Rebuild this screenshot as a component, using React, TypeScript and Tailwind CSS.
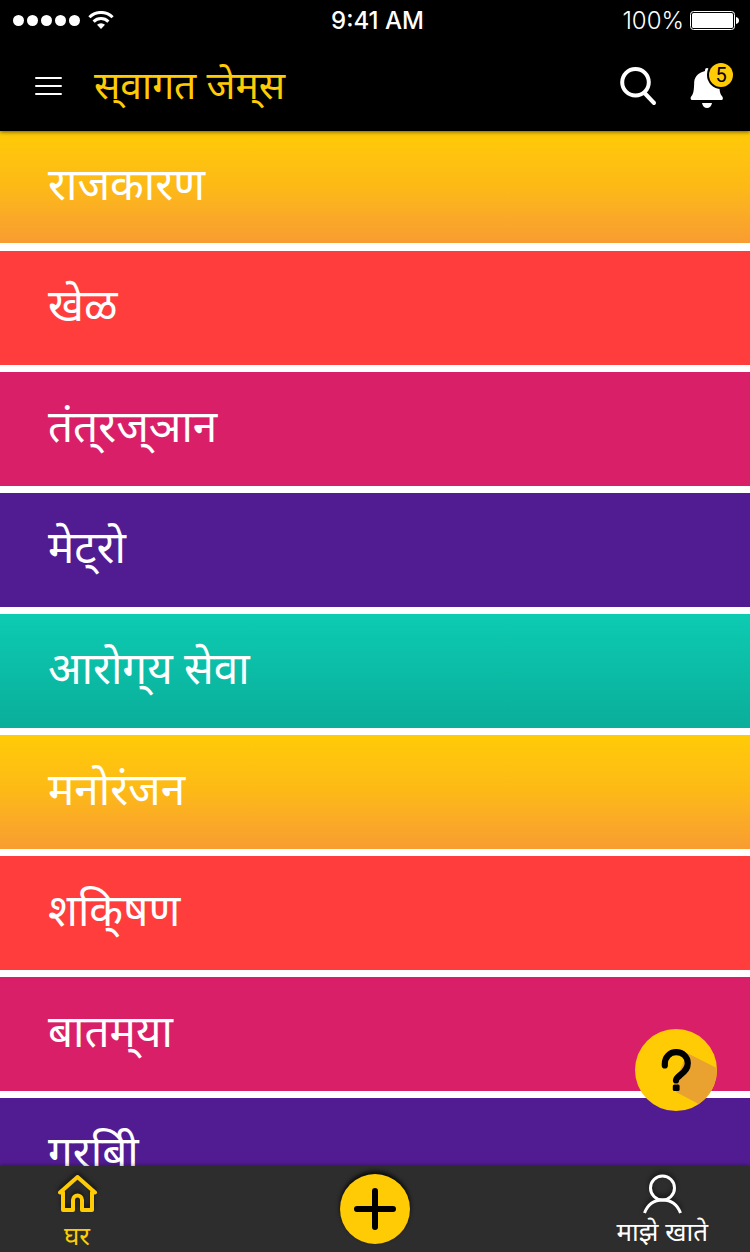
const categories = [
  { label: "राजकारण", tone: "bg-linear-to-b from-[#ffcb06] via-[#fdb916] to-[#f89c30]" },
  { label: "खेळ", tone: "bg-[#ff3d3d]" },
  { label: "तंत्\u200cरज्\u200cञान", tone: "bg-[#da1f69]" },
  { label: "मेट्\u200cरो", tone: "bg-[#511b92]" },
  { label: "आरोग्\u200cय सेवा", tone: "bg-linear-to-b from-[#0dcbb2] to-[#0aae9a]" },
  { label: "मनोरंजन", tone: "bg-linear-to-b from-[#ffcb06] via-[#fdb916] to-[#f89c30]" },
  { label: "शकि्षण", tone: "bg-[#ff3d3d]" },
  { label: "बातम्\u200cया", tone: "bg-[#da1f69]" },
  { label: "गरबिी", tone: "bg-[#511b92]" },
];

function StatusBar() {
  return (
    <div className="grid h-10 grid-cols-3 items-center pl-3 pr-[11px] font-['Inter',sans-serif] text-2xl text-white">
      <div className="flex items-center gap-[7px]">
        <svg className="h-3 w-[69px]" viewBox="0 0 69 12" fill="currentColor" aria-hidden="true">
          <circle cx="6.5" cy="6.5" r="5.5" />
          <circle cx="20.5" cy="6.5" r="5.5" />
          <circle cx="34.5" cy="6.5" r="5.5" />
          <circle cx="48.5" cy="6.5" r="5.5" />
          <circle cx="62.5" cy="6.5" r="5.5" />
        </svg>
        <svg className="h-[18px] w-[26px]" viewBox="0 0 26 18" fill="none" stroke="currentColor" strokeWidth="3" aria-hidden="true">
          <path d="M1.4 6.2a16.5 16.5 0 0 1 23.2 0" />
          <path d="M5.6 10.6a10.5 10.5 0 0 1 14.8 0" />
          <path d="M13 18l-4-4.2a5.8 5.8 0 0 1 8 0z" fill="currentColor" stroke="none" />
        </svg>
      </div>
      <div className="pl-1 pt-px text-center font-medium">9:41 AM</div>
      <div className="flex items-center justify-end gap-[6px]">
        <span className="pt-px font-light">100%</span>
        <svg className="h-[19px] w-[49px]" viewBox="0 0 49 19" aria-hidden="true">
          <rect x="0.5" y="0.5" width="44" height="18" rx="3" fill="none" stroke="currentColor" />
          <rect x="2" y="2" width="41" height="15" rx="1.5" fill="currentColor" />
          <path d="M46 6c2 .6 3 1.800 3 3.500s-1 2.900-3 3.500z" fill="currentColor" />
        </svg>
      </div>
    </div>
  );
}

export default function App() {
  return (
    <div className="relative flex h-screen flex-col overflow-hidden bg-white font-['Noto_Sans',sans-serif]">
      <header className="z-10 shrink-0 bg-black shadow-[0_1px_4px_rgba(0,0,0,0.55)]">
        <StatusBar />
        <div className="flex h-[91px] items-center pl-[35px] pr-4">
          <button type="button" aria-label="मेनू" className="text-white">
            <svg className="h-[19px] w-[27px]" viewBox="0 0 27 19" fill="none" stroke="currentColor" strokeWidth="2" strokeLinecap="round" aria-hidden="true">
              <path d="M1 2h25M1 10h25M1 18h25" />
            </svg>
          </button>
          <h1 className="ml-8 pb-1 text-[39px] leading-[56px] text-[#ffcb05]">स्&zwnj;वागत जेम्&zwnj;स</h1>
          <button type="button" aria-label="शोध" className="ml-auto text-white">
            <svg className="h-10 w-[38px]" viewBox="0 0 38 40" fill="none" stroke="currentColor" strokeWidth="4" strokeLinecap="round" aria-hidden="true">
              <circle cx="16.500" cy="16.300" r="13.300" />
              <path d="M26 27.500l9 9.500" />
            </svg>
          </button>
          <button type="button" aria-label="सूचना" className="relative ml-[33px] text-white">
            <svg className="h-[48px] w-11" viewBox="0 0 44 48" aria-hidden="true">
              <path d="M15 8a2 2 0 0 1 4 0v1c6 1.500 9.500 6 10 11 .5 9 1 12 3 14 1.500 2 1 4-.5 4H2.500c-2 0-2.500-2-1-4C3.500 32 4 28 4.200 20c.5-6 5-9.500 10.800-11z" fill="currentColor" />
              <path d="M12 41h10c-.5 3-2.500 5-5 5s-4.500-2-5-5z" fill="currentColor" />
              <circle cx="31" cy="13" r="14" fill="#000" />
              <circle cx="31" cy="13" r="12" fill="#ffcb05" />
            </svg>
            <span className="absolute right-px top-px w-6 text-center font-['Roboto',sans-serif] text-[20px] leading-6 text-black">5</span>
          </button>
        </div>
      </header>

      <main className="min-h-0 flex-1 overflow-y-auto [scrollbar-width:none]">
        <ul className="flex flex-col gap-[7px]">
          {categories.map(({ label, tone }) => (
            <li key={label} className="h-[114px] shrink-0 first:mb-px first:h-28">
              <a href="#" className={`flex h-full items-center px-12 pb-2 text-[44px] leading-[64px] text-white ${tone}`}>
                {label}
              </a>
            </li>
          ))}
        </ul>
      </main>

      <button type="button" aria-label="मदत" className="absolute bottom-[141px] right-[33px] z-20 size-[82px]">
        <svg className="size-full" viewBox="0 0 82 82" aria-hidden="true">
          <circle cx="41" cy="41" r="41" fill="#ffcb05" />
          <path d="M52 24l29.800 15a41 41 0 0 1-18.200 36L41 63l3-19z" fill="#e9a22f" />
          <path d="M29.800 36.500V35c0-6.800 4.700-11.800 11.400-11.800S52.800 28 52.800 34.200c0 5.300-3 8-6.500 11-3 2.600-5.300 4-5.300 6.300" fill="none" stroke="#000" strokeWidth="6.200" strokeLinecap="round" />
          <rect x="37.800" y="55.500" width="6.800" height="6.500" rx="1.500" fill="#000" />
        </svg>
      </button>

      <nav className="z-10 grid h-[86px] shrink-0 grid-cols-3 bg-[#2d2d2d] px-[42px] shadow-[0_-1px_4px_rgba(0,0,0,0.3)]">
        <a href="#" className="ml-[15px] flex w-10 flex-col items-center gap-1 justify-self-start pt-2 text-[#ffcb05]">
          <svg className="h-[39px] w-10 shrink-0 overflow-visible drop-shadow-[0_-3px_2px_rgba(0,0,0,0.5)]" viewBox="0 0 40 39" fill="none" stroke="currentColor" strokeWidth="4" strokeLinejoin="round" strokeLinecap="round" aria-hidden="true">
            <path d="M3 18.500L20.500 3 38 18.500M6 18v18h10V26c0-6 9-6 9 0v10h10V18" />
          </svg>
          <span className="text-[26px] leading-9">घर</span>
        </a>
        <button type="button" aria-label="जोडा" className="mt-2 size-[70px] justify-self-center rounded-full bg-[#ffcb05] shadow-[0_-3px_4px_rgba(0,0,0,0.8)]">
          <svg className="size-full" viewBox="0 0 70 70" fill="none" stroke="#000" strokeWidth="6" strokeLinecap="round" aria-hidden="true">
            <path d="M35 17v36M17 35h36" />
          </svg>
        </button>
        <a href="#" className="flex flex-col items-center justify-self-end pt-2 text-white">
          <svg className="h-[39px] w-10 shrink-0 overflow-visible drop-shadow-[0_-3px_2px_rgba(0,0,0,0.5)]" viewBox="0 0 40 39" fill="none" stroke="currentColor" strokeWidth="3" aria-hidden="true">
            <circle cx="20.500" cy="14" r="12" />
            <path d="M2.500 39c3-8 9-13 18-13s15 5 18 13" />
          </svg>
          <span className="whitespace-nowrap text-[26px] leading-9">माझे खाते</span>
        </a>
      </nav>
    </div>
  );
}
